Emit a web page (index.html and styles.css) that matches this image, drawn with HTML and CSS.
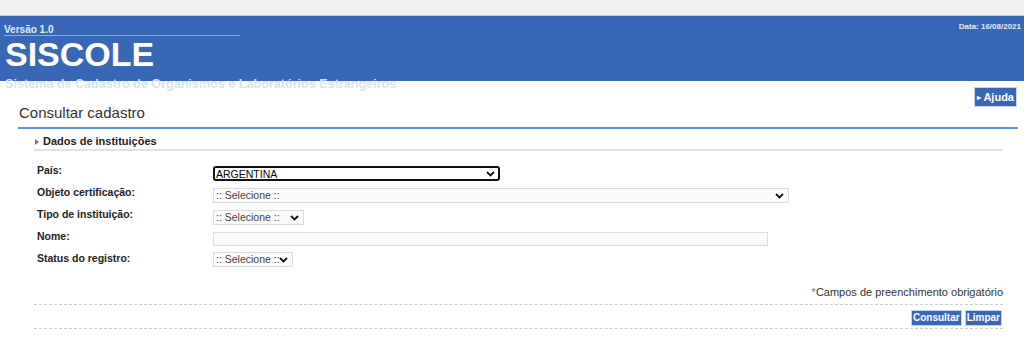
FILE: index.html
```html
<!DOCTYPE html>
<html lang="pt-BR">

<head>
    <meta charset="UTF-8">
    <meta name="viewport" content="width=device-width, initial-scale=1.0">
    <title>SISCOLE - Consultar cadastro</title>
    <link rel="stylesheet" href="styles.css">
</head>

<body>
    <div class="topbar"></div>
    <header class="header">
        <div class="brand">
            <div class="version">Versão 1.0</div>
            <h1>SISCOLE</h1>
            <div class="subtitle">Sistema de Cadastro de Organismos e Laboratórios Estrangeiros</div>
        </div>
        <div class="date">Data: 16/08/2021</div>
    </header>

    <main class="page">
        <div class="title-bar">
            <h2>Consultar cadastro</h2>
            <button class="btn btn-help"><span class="arrow">&#9656;</span> Ajuda</button>
        </div>

        <section class="panel">
            <h3 class="panel-title"><span class="tri"></span>Dados de instituições</h3>

            <div class="form-grid">
                <label for="pais">País:</label>
                <div class="field f-pais">
                    <div class="select focused" style="width: 287px">
                        <select id="pais"><option>ARGENTINA</option></select>
                        <svg class="chev" width="9" height="6" viewBox="0 0 9 6"><path d="M1 1 L4.5 4.5 L8 1" fill="none" stroke="#111" stroke-width="1.8"/></svg>
                    </div>
                </div>

                <label for="objeto">Objeto certificação:</label>
                <div class="field f-objeto">
                    <div class="select" style="width: 576px">
                        <select id="objeto"><option>:: Selecione ::</option></select>
                        <svg class="chev" width="9" height="6" viewBox="0 0 9 6"><path d="M1 1 L4.5 4.5 L8 1" fill="none" stroke="#111" stroke-width="1.8"/></svg>
                    </div>
                </div>

                <label for="tipo">Tipo de instituição:</label>
                <div class="field f-tipo">
                    <div class="select" style="width: 91px">
                        <select id="tipo"><option>:: Selecione ::</option></select>
                        <svg class="chev" width="9" height="6" viewBox="0 0 9 6"><path d="M1 1 L4.5 4.5 L8 1" fill="none" stroke="#111" stroke-width="1.8"/></svg>
                    </div>
                </div>

                <label for="nome">Nome:</label>
                <div class="field f-nome"><input id="nome" type="text" class="txt" style="width: 555px"></div>

                <label for="status">Status do registro:</label>
                <div class="field f-status">
                    <div class="select" style="width: 80px">
                        <select id="status"><option>:: Selecione ::</option></select>
                        <svg class="chev" width="9" height="6" viewBox="0 0 9 6"><path d="M1 1 L4.5 4.5 L8 1" fill="none" stroke="#111" stroke-width="1.8"/></svg>
                    </div>
                </div>
            </div>

            <p class="required"><span class="star">*</span>Campos de preenchimento obrigatório</p>

            <div class="actions">
                <button class="btn">Consultar</button>
                <button class="btn">Limpar</button>
            </div>
        </section>
    </main>
</body>

</html>
```

FILE: styles.css
```css
body {
  font-family: 'Liberation Sans', Arial, sans-serif;
  background-color: #fff;
  color: #222;
  margin: 0;
  font-size: 11px;
}
.topbar {
  height: 16px;
  background-color: #f0f0f0;
  border-bottom: 1px solid #b9c9e6;
  box-sizing: border-box;
}
.header {
  background-color: #3867b5;
  height: 65px;
  display: flex;
  justify-content: space-between;
  align-items: flex-start;
}
.brand {
  padding-left: 4px;
}
.version {
  width: 236px;
  font-size: 10px;
  font-weight: bold;
  color: #e4ecf8;
  padding-top: 8px;
  border-bottom: 1px solid #90acde;
  line-height: 11px;
}
.header h1 {
  margin: 0;
  font-size: 34px;
  line-height: 36px;
  color: #fff;
  padding-left: 1px;
}
.subtitle {
  font-size: 12.6px;
  font-weight: bold;
  color: #d6e4f8;
  line-height: 14px;
  margin-top: 5px;
  padding-left: 1px;
  white-space: nowrap;
}
.date {
  font-size: 8px;
  font-weight: bold;
  color: #e4ecf8;
  padding: 6px 3px 0 0;
}
.page {
  padding: 7px 6px 0 18px;
}
.title-bar {
  display: flex;
  justify-content: space-between;
  align-items: flex-start;
  height: 39px;
  border-bottom: 2px solid #5d94dd;
}
.title-bar h2 {
  margin: 16px 0 0 1px;
  font-size: 15px;
  font-weight: normal;
  color: #333;
  line-height: 18px;
}
.btn {
  font-family: 'Liberation Sans', Arial, sans-serif;
  background-color: #3867b5;
  color: #fff;
  font-weight: bold;
  font-size: 10px;
  border: 1px solid #c5d4ee;
  padding: 0 1px;
  height: 16px;
  line-height: 14px;
  cursor: pointer;
}
.btn-help {
  height: 20px;
  font-size: 11px;
  padding: 0 2px 0 2px;
  margin: -1px 1px 0 0;
}
.btn-help .arrow {
  font-size: 8px;
  vertical-align: 1px;
}
.panel {
  margin: 0 15px 0 16px;
}
.panel-title {
  margin: 0;
  padding: 6px 0 2px 0;
  font-size: 11px;
  font-weight: bold;
  color: #222;
  border-bottom: 2px solid #e2e2e2;
  display: flex;
  align-items: center;
}
.tri {
  width: 0;
  height: 0;
  border-top: 3px solid transparent;
  border-bottom: 3px solid transparent;
  border-left: 4px solid #8a6d3b;
  margin: 1px 4px 0 1px;
}
.form-grid {
  display: grid;
  grid-template-columns: 179px 1fr;
  grid-auto-rows: 22px;
  margin-top: 14px;
  align-items: start;
}
.form-grid label {
  font-weight: bold;
  font-size: 10.5px;
  line-height: 11px;
  color: #222;
  padding-left: 3px;
}
.f-pais {
  margin-top: 1px;
}
.f-objeto {
  margin-top: 1px;
}
.f-tipo {
  margin-top: 1px;
}
.f-nome {
  margin-top: 1px;
}
.f-status {
  margin-top: -1px;
}
.select {
  position: relative;
  height: 15px;
  box-sizing: border-box;
  border: 1px solid #dcdcdc;
  background-color: #fafafa;
}
.select select {
  appearance: none;
  -webkit-appearance: none;
  display: block;
  width: 100%;
  height: 100%;
  margin: 0;
  padding: 0 12px 0 2px;
  border: none;
  background: transparent;
  font-family: 'Liberation Sans', Arial, sans-serif;
  font-size: 10.5px;
  line-height: 13px;
  color: #444;
  outline: none;
}
.select .chev {
  position: absolute;
  right: 4px;
  top: 4px;
}
.select.focused {
  border: 2px solid #111;
  border-radius: 3px;
  background-color: #fff;
}
.select.focused select {
  color: #000;
  padding-left: 1px;
}
.select.focused .chev {
  top: 3px;
  right: 3px;
}
.txt {
  display: block;
  height: 14px;
  border: 1px solid #dcdcdc;
  background-color: #fafafa;
  padding: 0;
  margin: 0;
  box-sizing: border-box;
}
.required {
  text-align: right;
  margin: 11px 0 0 0;
  font-size: 11px;
  color: #333;
  padding-bottom: 6px;
  border-bottom: 1px dashed #ccc;
}
.star {
  color: #e53c3c;
}
.actions {
  display: flex;
  justify-content: flex-end;
  gap: 3px;
  padding: 5px 1px 2px 0;
  border-bottom: 1px dashed #ccc;
}
```
